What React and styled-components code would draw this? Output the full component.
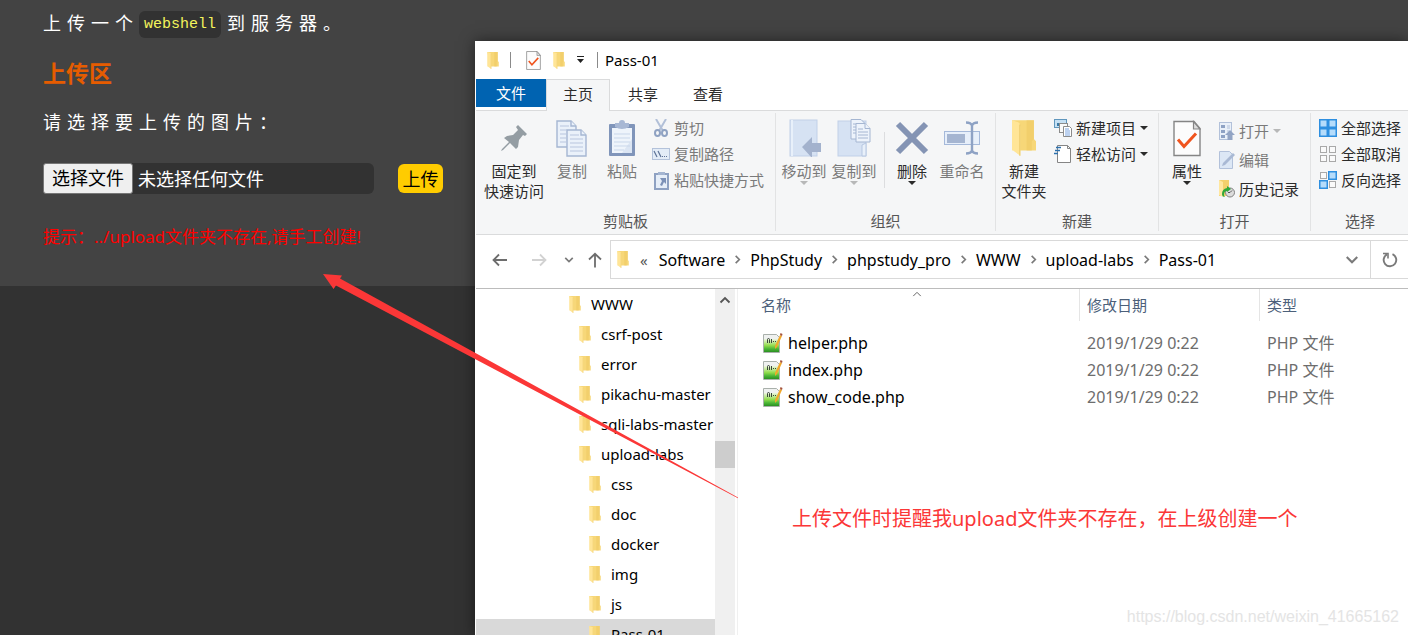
import React, { useState } from 'react';
import styled, { createGlobalStyle } from 'styled-components';

const GlobalStyle = createGlobalStyle`
  * {
    box-sizing: border-box;
  }

  body {
    margin: 0;
    background: #323232;
    font-family: 'Noto Sans', 'Noto Sans CJK SC', sans-serif;
    font-size: 15px;
    line-height: 20px;
  }

  button {
    margin: 0;
    padding: 0;
    border: 0;
    background: none;
    color: inherit;
    font: inherit;
  }
`;

/* ---------- icons ---------- */

const FolderIcon = ({ width = 12, height = 17 }) => (
  <svg width={width} height={height} viewBox='0 0 23 34'>
    <path d='M0 0h21v18l2 2v9H7z' fill='#f7d778' />
    <path d='M14 0h7v18l-2 2v9h-5z' fill='#efca64' opacity='.6' />
    <path d='M0 0l6 2q2 1 2 4v28l-7-5H0z' fill='#ffe597' />
    <path d='M7.500 4v30' stroke='#ecca6b' />
  </svg>
);

const CheckDocIcon = ({ width = 15, height = 19 }) => (
  <svg width={width} height={height} viewBox='0 0 28 36'>
    <path d='M1 1h20l6 7v27H1z' fill='#fcfcfc' stroke='#858585' strokeWidth='1.400' />
    <path d='M20.500 1v7.500H27z' fill='#ddd' stroke='#858585' strokeWidth='1.200' />
    <path d='M5 19l6 7 12-13' fill='none' stroke='#f0541e' strokeWidth='3' />
  </svg>
);

const QuickCaretIcon = () => (
  <svg width='8' height='8' viewBox='0 0 8 8'>
    <path d='M0 0h7v1H0zM0 3h7L3.500 7z' fill='#222' />
  </svg>
);

const PinIcon = () => (
  <svg width='28' height='28' viewBox='0 0 28 28'>
    <path
      d='M18 1l9 9-2 2-2-1-4 5-1 7-2 2-6-6-7 7-2 1 1-2 7-7-5-4 3-2 6-1 5-5-2-3z'
      fill='#949da3'
    />
  </svg>
);

const CopyIcon = () => (
  <svg width='32' height='37' viewBox='0 0 32 37'>
    <g fill='#eaf1fa' stroke='#a5b6d2' strokeWidth='1.400'>
      <path d='M1 1h14l5 5v21H1z' />
      <path d='M15 1v5h5' />
      <path d='M11 10h14l5 5v21H11z' />
      <path d='M25 10v5h5' />
    </g>
    <path
      d='M4 6h9M4 10h7M4 14h6M4 18h6M4 22h6M14 15h9M14 19h13M14 23h13M14 27h13M14 31h13'
      stroke='#b7c6de'
      strokeWidth='1.200'
    />
  </svg>
);

const PasteIcon = () => (
  <svg width='28' height='37' viewBox='0 0 28 37'>
    <rect x='1' y='4' width='26' height='32' rx='1' fill='#8095ba' />
    <rect x='4' y='8' width='20' height='25' fill='#eef4fb' />
    <path d='M14 33h10V19z' fill='#dbe5f3' />
    <path d='M6 14h16M6 18h16M6 22h16M6 26h16M6 30h10' stroke='#c9d7ea' />
    <path d='M7 3h4a3 3 0 0 1 6 0h4v4q-7 4-14 0z' fill='#a8b8d4' />
  </svg>
);

const CutIcon = () => (
  <svg width='18' height='18' viewBox='0 0 18 18'>
    <path d='M4 0l7 12M14 0L7 12' stroke='#b2c0d8' strokeWidth='2' />
    <g fill='none' stroke='#8fa2c2' strokeWidth='2'>
      <ellipse cx='5.500' cy='14' rx='2.500' ry='3' />
      <ellipse cx='12.500' cy='14' rx='2.500' ry='3' />
    </g>
  </svg>
);

const PathIcon = () => (
  <svg width='18' height='12' viewBox='0 0 18 12'>
    <rect x='.5' y='.5' width='17' height='11' fill='#e3ecf7' stroke='#b3c2da' />
    <path d='M2 3l3 6M6 3l3 6' stroke='#5f7397' strokeWidth='1.200' />
    <path d='M10 8h1v1h-1zM12 8h1v1h-1zM14 8h1v1h-1z' fill='#5f7397' />
  </svg>
);

const PasteLinkIcon = () => (
  <svg width='18' height='19' viewBox='0 0 18 19'>
    <rect x='3' y='3' width='13' height='15' fill='#e6eef8' stroke='#8ea1c2' strokeWidth='2' />
    <path d='M6 1h7v3H6z' fill='#a4b5d1' />
    <path d='M8 7h6v6l-2-2-2 4-2-1 2-4z' fill='#7c91b7' />
  </svg>
);

const MoveToIcon = () => (
  <svg width='34' height='38' viewBox='0 0 34 38'>
    <rect x='3' y='1' width='27' height='36' fill='#d6e2f3' stroke='#c1d0e8' />
    <path d='M5 1v36' stroke='#e8f0fa' strokeWidth='2' />
    <path d='M15 28l10-10v6h9v9h-9v6z' fill='#a3b2cd' />
  </svg>
);

const CopyToIcon = () => (
  <svg width='34' height='38' viewBox='0 0 34 38'>
    <rect x='1' y='2' width='28' height='35' fill='#d6e2f3' stroke='#c1d0e8' />
    <path d='M25 37V26l4-2v13z' fill='#e8f0fa' stroke='#b6c7e1' />
    <g fill='#edf3fb' stroke='#a5b6d2'>
      <path d='M14 .5h10l4 4V20H14z' />
      <path d='M19 4.500h9l5 5V23H19z' />
      <path d='M28 4.500v5h5' />
    </g>
    <path d='M16 5h3M16 8h3M16 11h3M16 14h3M21 10h5M21 13h10M21 16h10M21 19h10' stroke='#a5b6d2' />
  </svg>
);

const DeleteIcon = () => (
  <svg width='34' height='34' viewBox='0 0 34 34'>
    <path d='M3 3l28 28M31 3L3 31' stroke='#8494b4' strokeWidth='6' />
  </svg>
);

const RenameIcon = () => (
  <svg width='36' height='34' viewBox='0 0 36 34'>
    <rect x='.5' y='10.500' width='35' height='13' fill='#e7effa' stroke='#a5b9da' />
    <rect x='3' y='13' width='18' height='9' fill='#a5b5d1' />
    <path
      d='M22 1.500q5 0 6 3 1-3 6-3M22 32.500q5 0 6-3 1 3 6 3M28 4v26'
      fill='none'
      stroke='#8ea2c4'
      strokeWidth='2.400'
    />
  </svg>
);

const NewItemIcon = () => (
  <svg width='18' height='18' viewBox='0 0 18 18'>
    <rect x='.5' y='.5' width='12' height='8' fill='#c5e0f4' stroke='#5f96bd' />
    <path d='M3 7V4h3v3z' fill='#3c7aa5' />
    <rect x='5.500' y='4.500' width='8' height='9' fill='#fafafa' stroke='#8b8b8b' />
    <path d='M9.500 7.500h6l2 2v8h-8z' fill='#fff' stroke='#8b8b8b' />
    <path d='M11 10h4M11 12h5M11 14h5M11 16h5' stroke='#7ba4e0' />
  </svg>
);

const EasyAccessIcon = () => (
  <svg width='18' height='18' viewBox='0 0 18 18'>
    <path d='M3.500 .5h10l3 3v14h-13z' fill='#fff' stroke='#858585' />
    <path d='M13.500 .5v3h3' fill='none' stroke='#858585' />
    <path d='M2 2.500h5M1 5.500h5M0 8.500h4' stroke='#2c71ae' strokeWidth='1.500' />
  </svg>
);

const OpenIcon = () => (
  <svg width='18' height='18' viewBox='0 0 18 18'>
    <rect x='2.500' y='.5' width='12' height='17' fill='#e9f0f9' stroke='#b2c1da' />
    <path d='M4 3h4v3H4zM4 8h4v3H4zM4 13h4v3H4z' fill='#8ea2c4' />
    <path d='M10 4h3M10 6h3M10 9h2' stroke='#b2c1da' />
    <path d='M13 8l5 5h-2.500v5h-5v-5H8z' fill='#92a4c4' />
  </svg>
);

const EditIcon = () => (
  <svg width='18' height='18' viewBox='0 0 18 18'>
    <path d='M2.500 .5h10l3 3v14h-13z' fill='#dce7f5' stroke='#b2c1da' />
    <path d='M5 15l1-3L16 2l2 2L8 14z' fill='#a9b9d4' />
  </svg>
);

const HistoryIcon = () => (
  <svg width='18' height='18' viewBox='0 0 18 18'>
    <path d='M2 0h10v16H2z' fill='#f3d06c' />
    <path d='M2 0l4 2v15l-4-2z' fill='#ffe79f' />
    <circle cx='13' cy='12.500' r='4.500' fill='#dcdcdc' stroke='#818181' />
    <path d='M13 12.500l2-2M13 12.500h-2' stroke='#555' />
    <path d='M5 14q0-5 5-6V6l4 3-4 3v-1q-3 0-3 4 0 1 1 2-3 0-3-3z' fill='#30a83a' />
  </svg>
);

const SELECT_CELLS = [
  [1, 1],
  [10, 1],
  [1, 10],
  [10, 10],
];

// filled: which of the four cells are drawn as selected
const SelectIcon = ({ filled }) => (
  <svg width='18' height='18' viewBox='0 0 18 18'>
    {SELECT_CELLS.map(([x, y], index) => (
      <rect
        key={index}
        x={filled[index] ? x - 0.25 : x + 0.5}
        y={filled[index] ? y - 0.25 : y + 0.5}
        width={filled[index] ? 7.5 : 6}
        height={filled[index] ? 7.5 : 6}
        fill={filled[index] ? '#b5dcfb' : '#fafafa'}
        stroke={filled[index] ? '#2e8fe0' : '#a9a9a9'}
        strokeWidth={filled[index] ? 1.5 : 1}
      />
    ))}
  </svg>
);

const Chevron = ({ d, width = 12, height = 12, color = '#7a7a7a', stroke = 1.8 }) => (
  <svg width={width} height={height} viewBox='0 0 12 12'>
    <path d={d} fill='none' stroke={color} strokeWidth={stroke} />
  </svg>
);

const DOWN = 'M1.500 3.500L6 8l4.500-4.500';
const UP = 'M1.500 8.500L6 4l4.500 4.500';
const RIGHT = 'M4 2l4 4-4 4';

const ArrowIcon = ({ d, color = '#6d6d6d' }) => (
  <svg width='16' height='16' viewBox='0 0 16 16'>
    <path d={d} fill='none' stroke={color} strokeWidth='1.800' />
  </svg>
);

const RefreshIcon = () => (
  <svg width='16' height='16' viewBox='0 0 16 16'>
    <path d='M10.500 2.200a6.300 6.300 0 1 1-5.500.2' fill='none' stroke='#7a7a7a' strokeWidth='1.900' />
    <path d='M1 1.500h5v5' fill='none' stroke='#7a7a7a' strokeWidth='1.600' />
  </svg>
);

const PhpFileIcon = () => (
  <svg width='20' height='20' viewBox='0 0 20 20'>
    <defs>
      <linearGradient id='php-green' x1='0' y1='0' x2='0' y2='1'>
        <stop offset='0' stopColor='#eef6e0' />
        <stop offset='.5' stopColor='#92dc4e' />
        <stop offset='.75' stopColor='#4db837' />
        <stop offset='1' stopColor='#2a8f22' />
      </linearGradient>
    </defs>
    <path d='M.5 1.500h13l3 3v15H.5z' fill='#eff1f0' stroke='#a9b0ab' />
    <path d='M1 6h15v13H1z' fill='url(#php-green)' />
    <path
      d='M4.500 10V6.500q0-1 1-1t1 1V10M8.500 6v4M10 8.500h1M12 8.500h1'
      stroke='#3a463a'
      fill='none'
    />
    <path d='M17 2l2 1-5 11-2 2v-3z' fill='#f0a82c' />
    <path d='M17.500 0l2 1-.5 2-2-1z' fill='#a4523c' />
  </svg>
);

/* ---------- data ---------- */

const CLIPBOARD_ACTIONS = [
  { label: '剪切', icon: <CutIcon />, disabled: true },
  { label: '复制路径', icon: <PathIcon />, disabled: true },
  { label: '粘贴快捷方式', icon: <PasteLinkIcon />, disabled: true },
];

const NEW_ACTIONS = [
  { label: '新建项目', icon: <NewItemIcon />, caret: true },
  { label: '轻松访问', icon: <EasyAccessIcon />, caret: true },
];

const OPEN_ACTIONS = [
  { label: '打开', icon: <OpenIcon />, caret: true, disabled: true },
  { label: '编辑', icon: <EditIcon />, disabled: true },
  { label: '历史记录', icon: <HistoryIcon /> },
];

const SELECT_ACTIONS = [
  { label: '全部选择', icon: <SelectIcon filled={[1, 1, 1, 1]} /> },
  { label: '全部取消', icon: <SelectIcon filled={[0, 0, 0, 0]} /> },
  { label: '反向选择', icon: <SelectIcon filled={[0, 1, 1, 0]} /> },
];

const CRUMBS = ['Software', 'PhpStudy', 'phpstudy_pro', 'WWW', 'upload-labs', 'Pass-01'];

const TREE = [
  { name: 'WWW', level: 0 },
  { name: 'csrf-post', level: 1 },
  { name: 'error', level: 1 },
  { name: 'pikachu-master', level: 1 },
  { name: 'sqli-labs-master', level: 1 },
  { name: 'upload-labs', level: 1 },
  { name: 'css', level: 2 },
  { name: 'doc', level: 2 },
  { name: 'docker', level: 2 },
  { name: 'img', level: 2 },
  { name: 'js', level: 2 },
  { name: 'Pass-01', level: 2 },
];

const FILES = ['helper.php', 'index.php', 'show_code.php'];

/* ---------- parts ---------- */

const LargeAction = ({ icon, lines, width, caret, disabled }) => (
  <LargeButton type='button' $width={width} disabled={disabled}>
    <LargeIcon>{icon}</LargeIcon>
    {lines.map((line) => (
      <span key={line}>{line}</span>
    ))}
    {caret && <Caret />}
  </LargeButton>
);

const SmallActions = ({ items, indent, roomy }) => (
  <SmallColumn $indent={indent} $roomy={roomy}>
    {items.map(({ label, icon, caret, disabled }) => (
      <SmallButton key={label} type='button' disabled={disabled} $roomy={roomy}>
        <SmallIcon>{icon}</SmallIcon>
        {label}
        {caret && <Caret />}
      </SmallButton>
    ))}
  </SmallColumn>
);

const UploadPanel = () => {
  const [fileName, setFileName] = useState('');

  return (
    <Panel>
      <Task>
        上传一个<Code>webshell</Code>到服务器。
      </Task>
      <Heading>上传区</Heading>
      <Prompt>请选择要上传的图片：</Prompt>
      <Form onSubmit={(e) => e.preventDefault()}>
        <FileLabel>
          <FileInput
            type='file'
            onChange={(e) => setFileName(e.target.files[0] ? e.target.files[0].name : '')}
          />
          <FileButton>选择文件</FileButton>
          {fileName || '未选择任何文件'}
        </FileLabel>
        <Submit type='submit'>上传</Submit>
      </Form>
      <Hint>提示：../upload文件夹不存在,请手工创建!</Hint>
    </Panel>
  );
};

const Ribbon = () => (
  <RibbonBar>
    <Group>
      <GroupBody $left={5} $right={11}>
        <LargeAction icon={<PinIcon />} lines={['固定到', '快速访问']} width={66} />
        <LargeAction icon={<CopyIcon />} lines={['复制']} width={50} disabled />
        <LargeAction icon={<PasteIcon />} lines={['粘贴']} width={50} disabled />
        <SmallActions items={CLIPBOARD_ACTIONS} indent={5} />
      </GroupBody>
      <GroupName>剪贴板</GroupName>
    </Group>
    <Group>
      <GroupBody $left={3} $right={5}>
        <LargeAction icon={<MoveToIcon />} lines={['移动到']} width={50} caret disabled />
        <LargeAction icon={<CopyToIcon />} lines={['复制到']} width={50} caret disabled />
        <GroupRule />
        <LargeAction icon={<DeleteIcon />} lines={['删除']} width={44} caret />
        <LargeAction icon={<RenameIcon />} lines={['重命名']} width={56} disabled />
      </GroupBody>
      <GroupName>组织</GroupName>
    </Group>
    <Group>
      <GroupBody $left={0} $right={10}>
        <LargeAction icon={<FolderIcon width={24} height={36} />} lines={['新建', '文件夹']} width={56} />
        <SmallActions items={NEW_ACTIONS} indent={2} />
      </GroupBody>
      <GroupName>新建</GroupName>
    </Group>
    <Group>
      <GroupBody $left={0} $right={11}>
        <LargeAction icon={<CheckDocIcon width={28} height={37} />} lines={['属性']} width={56} caret />
        <SmallActions items={OPEN_ACTIONS} indent={2} roomy />
      </GroupBody>
      <GroupName>打开</GroupName>
    </Group>
    <Group>
      <GroupBody $left={0} $right={8}>
        <SmallActions items={SELECT_ACTIONS} indent={8} />
      </GroupBody>
      <GroupName>选择</GroupName>
    </Group>
  </RibbonBar>
);

const Explorer = () => (
  <Window>
    <TitleBar>
      <FolderIcon />
      <TitleRule />
      <QuickTools>
        <CheckDocIcon />
        <FolderIcon />
        <QuickCaretIcon />
      </QuickTools>
      <TitleRule />
      <span>Pass-01</span>
    </TitleBar>
    <Tabs>
      <FileTab type='button'>文件</FileTab>
      <Tab type='button' $active>主页</Tab>
      <Tab type='button'>共享</Tab>
      <Tab type='button'>查看</Tab>
    </Tabs>
    <Ribbon />
    <AddressRow>
      <NavButton type='button' aria-label='后退' $width={40}>
        <ArrowIcon d='M15 8H1.500M7 2.500L1.500 8 7 13.500' />
      </NavButton>
      <NavButton type='button' aria-label='前进' $width={38}>
        <ArrowIcon d='M1 8h13.500M9 2.500L14.500 8 9 13.500' color='#d2d2d2' />
      </NavButton>
      <NavButton type='button' aria-label='最近浏览的位置' $width={22}>
        <Chevron d={DOWN} width={10} height={10} stroke={2} />
      </NavButton>
      <NavButton type='button' aria-label='上移' $width={30}>
        <ArrowIcon d='M8 15.500V2M2 7.500L8 1.800l6 5.700' />
      </NavButton>
      <Address>
        <FolderIcon />
        <More>«</More>
        {CRUMBS.map((crumb, index) => (
          <React.Fragment key={crumb}>
            {index > 0 && <Chevron d={RIGHT} width={11} height={11} />}
            <button type='button'>{crumb}</button>
          </React.Fragment>
        ))}
        <AddressEnd>
          <Chevron d={DOWN} width={14} height={14} />
        </AddressEnd>
        <Refresh type='button' aria-label='刷新'>
          <RefreshIcon />
        </Refresh>
      </Address>
    </AddressRow>
    <Content>
      <Tree>
        {TREE.map(({ name, level }, index) => (
          <TreeRow key={name} $level={level} $selected={index === TREE.length - 1}>
            <FolderIcon />
            {name}
          </TreeRow>
        ))}
      </Tree>
      <Scrollbar>
        <Chevron d={UP} color='#555' />
        <Thumb />
      </Scrollbar>
      <Listing>
        <FileTable>
          <thead>
            <tr>
              <HeadCell>
                名称
                <SortMark>
                  <Chevron d={UP} width={10} height={10} color='#666' stroke={1.2} />
                </SortMark>
              </HeadCell>
              <HeadCell $width={180}>修改日期</HeadCell>
              <HeadCell $width={148}>类型</HeadCell>
            </tr>
          </thead>
          <tbody>
            {FILES.map((file) => (
              <tr key={file}>
                <NameCell>
                  <FileName>
                    <PhpFileIcon />
                    {file}
                  </FileName>
                </NameCell>
                <Cell>2019/1/29 0:22</Cell>
                <Cell>PHP 文件</Cell>
              </tr>
            ))}
          </tbody>
        </FileTable>
      </Listing>
    </Content>
  </Window>
);

const App = () => (
  <Desktop lang='zh-CN'>
    <GlobalStyle />
    <UploadPanel />
    <Explorer />
    <Pointer width='420' height='230' viewBox='0 0 420 230'>
      <path d='M3 4l19 1.500-2 3L418 227.500v.8L16 15.500 13.500 19z' fill='#fb3737' />
    </Pointer>
    <Note>上传文件时提醒我upload文件夹不存在，在上级创建一个</Note>
    <Watermark>https://blog.csdn.net/weixin_41665162</Watermark>
  </Desktop>
);

/* ---------- upload page ---------- */

const Desktop = styled.div`
  position: relative;
  min-height: 100vh;
  overflow: hidden;
`;

const Panel = styled.main`
  padding: 10px 43px 36px;
  background: #434343;
  color: #fff;
  font-size: 18px;
  line-height: 26px;
`;

const Task = styled.p`
  margin: 0;
  letter-spacing: 6px;
`;

const Code = styled.code`
  margin-right: 6px;
  padding: 5px;
  border-radius: 6px;
  background: #323232;
  color: #f4f45c;
  font-family: 'Liberation Mono', monospace;
  font-size: 15px;
  letter-spacing: normal;
  line-height: 16px;
  vertical-align: 2px;
`;

const Heading = styled.h3`
  margin: 22px 0 0;
  color: #e65c00;
  font-size: 23px;
  line-height: 30px;
`;

const Prompt = styled.p`
  margin: 21px 0 0;
  letter-spacing: 6px;
`;

const Form = styled.form`
  display: flex;
  align-items: center;
  gap: 24px;
  margin-top: 28px;
`;

const FileLabel = styled.label`
  position: relative;
  display: flex;
  align-items: center;
  gap: 5px;
  width: 331px;
  height: 31px;
  border-radius: 6px;
  background: #323232;
`;

const FileInput = styled.input`
  position: absolute;
  inset: 0;
  width: 100%;
  opacity: 0;
`;

const FileButton = styled.span`
  padding: 0 8px;
  border: 1px solid #767676;
  border-radius: 3px;
  background: #efefef;
  color: #000;
  line-height: 29px;
`;

const Submit = styled.button`
  width: 45px;
  height: 29px;
  border-radius: 6px;
  background: #fc0;
  color: #000;
`;

const Hint = styled.p`
  margin: 30px 0 0;
  color: #f00;
  font-size: 17px;
`;

/* ---------- explorer window ---------- */

const Window = styled.section`
  position: absolute;
  top: 41px;
  right: 0;
  bottom: 0;
  left: 475px;
  display: flex;
  flex-direction: column;
  border-left: 1px solid #fff;
  background: #fff;
  color: #000;
  box-shadow: 0 0 14px rgba(0, 0, 0, 0.5);
`;

const TitleBar = styled.header`
  display: flex;
  align-items: center;
  gap: 7px;
  height: 38px;
  padding-left: 11px;
`;

const TitleRule = styled.span`
  width: 1px;
  height: 16px;
  margin-left: 4px;
  background: #8a8a8a;
`;

const QuickTools = styled.div`
  display: flex;
  align-items: center;
  gap: 12px;
  padding: 0 1px 0 8px;
`;

const Tabs = styled.nav`
  display: flex;
  height: 32px;
  border-bottom: 1px solid #dadbdc;
  color: #2b2b2b;
`;

const FileTab = styled.button`
  width: 70px;
  height: 28px;
  background: #0063b1;
  color: #fff;
`;

const Tab = styled.button`
  width: 64px;
  height: 32px;
  margin-right: 1px;
  padding-bottom: 3px;
  border: 1px solid transparent;
  border-bottom: 0;
  ${({ $active }) => $active && 'border-color: #dadbdc; background: #f5f6f7;'}
`;

const RibbonBar = styled.div`
  display: flex;
  padding: 2px 0 3px;
  border-bottom: 1px solid #dadbdc;
  background: #f5f6f7;
  color: #2b2b2b;
  white-space: nowrap;
`;

const Group = styled.div`
  flex-shrink: 0;
  padding-top: 2px;
  border-right: 1px solid #e2e3e4;

  &:last-child {
    border-right: 0;
  }
`;

const GroupBody = styled.div`
  display: flex;
  height: 96px;
  padding: 0 ${({ $right }) => $right}px 0 ${({ $left }) => $left}px;
`;

const GroupName = styled.div`
  color: #555;
  text-align: center;
`;

const GroupRule = styled.span`
  width: 1px;
  margin: 17px 5px 23px;
  background: #dcdddf;
`;

const Caret = styled.span`
  border: 4px solid transparent;
  border-top-color: currentColor;
  border-bottom: 0;
`;

const LargeButton = styled.button`
  display: flex;
  flex-direction: column;
  align-items: center;
  width: ${({ $width }) => $width}px;

  &:disabled {
    color: #7a7a7a;
  }

  &:disabled ${Caret} {
    opacity: 0.5;
  }
`;

const LargeIcon = styled.span`
  display: flex;
  align-items: center;
  justify-content: center;
  height: 46px;
`;

const SmallColumn = styled.div`
  display: flex;
  flex-direction: column;
  padding: ${({ $roomy }) => ($roomy ? 1 : 0)}px 0 0 ${({ $indent }) => $indent}px;
`;

const SmallButton = styled.button`
  display: flex;
  align-items: center;
  height: ${({ $roomy }) => ($roomy ? 29 : 26)}px;

  &:disabled {
    color: #7a7a7a;
  }

  ${Caret} {
    margin-left: 4px;
  }

  &:disabled ${Caret} {
    opacity: 0.5;
  }
`;

const SmallIcon = styled.span`
  display: flex;
  align-items: center;
  width: 18px;
  margin-right: 4px;
`;

const AddressRow = styled.div`
  display: flex;
  padding: 5px 0 9px 4px;
  border-bottom: 1px solid #bcbcbc;
`;

const NavButton = styled.button`
  display: flex;
  align-items: center;
  justify-content: center;
  width: ${({ $width }) => $width}px;
`;

const Address = styled.div`
  display: flex;
  flex: 1;
  align-items: center;
  gap: 7px;
  height: 39px;
  padding-left: 6px;
  border: 1px solid #d9d9d9;
  border-right: 0;
  font-size: 16px;
`;

const More = styled.span`
  padding: 0 4px;
  color: #555;
  font-size: 15px;
`;

const AddressEnd = styled.span`
  display: flex;
  margin-left: auto;
  padding-right: 4px;
`;

const Refresh = styled.button`
  display: flex;
  align-items: center;
  justify-content: center;
  width: 38px;
  height: 37px;
  border-left: 1px solid #d9d9d9;
`;

const Content = styled.div`
  display: flex;
  flex: 1;
  min-height: 0;
`;

const Tree = styled.ul`
  width: 239px;
  margin: 0;
  padding: 0;
  overflow: hidden;
  list-style: none;
`;

const TreeRow = styled.li`
  display: flex;
  align-items: center;
  gap: 10px;
  height: 30px;
  padding-left: ${({ $level }) => 93 + $level * 10}px;
  background: ${({ $selected }) => ($selected ? '#d9d9d9' : 'transparent')};
  white-space: nowrap;

  svg {
    flex-shrink: 0;
  }
`;

const Scrollbar = styled.div`
  display: flex;
  flex-direction: column;
  align-items: center;
  width: 20px;
  padding-top: 5px;
  background: #f0f0f0;
`;

const Thumb = styled.span`
  width: 100%;
  height: 27px;
  margin-top: 135px;
  background: #cdcdcd;
`;

const Listing = styled.div`
  flex: 1;
  margin-left: 2px;
  padding-left: 16px;
  border-left: 1px solid #f0f0f0;
`;

const FileTable = styled.table`
  width: 100%;
  border-collapse: separate;
  border-spacing: 0;
  table-layout: fixed;

  thead::after {
    content: '';
    display: block;
    height: 8px;
  }
`;

const HeadCell = styled.th`
  position: relative;
  width: ${({ $width }) => ($width ? `${$width}px` : 'auto')};
  height: 32px;
  padding: 0 7px;
  border-right: 1px solid #e5e5e5;
  color: #4c607a;
  font-weight: 400;
  text-align: left;

  &:last-child {
    border-right: 0;
  }
`;

const SortMark = styled.span`
  position: absolute;
  top: 0;
  left: 50%;
  display: flex;
  transform: translateX(-50%);
`;

const Cell = styled.td`
  height: 27px;
  padding: 0 7px;
  color: #6d6d6d;
  font-size: 16px;
`;

const NameCell = styled(Cell)`
  color: #000;
`;

const FileName = styled.span`
  display: flex;
  align-items: center;
  gap: 5px;
  padding-left: 2px;
`;

/* ---------- marks drawn over the desktop ---------- */

const Pointer = styled.svg`
  position: absolute;
  top: 270px;
  left: 320px;
  pointer-events: none;
`;

const Note = styled.p`
  position: absolute;
  top: 504px;
  left: 792px;
  margin: 0;
  color: #fb3737;
  font-size: 20px;
  line-height: 30px;
  white-space: nowrap;
`;

const Watermark = styled.span`
  position: absolute;
  right: 9px;
  bottom: 8px;
  color: #e4e4e4;
  font-family: 'Liberation Sans', sans-serif;
  font-size: 16px;
`;

export default App;
